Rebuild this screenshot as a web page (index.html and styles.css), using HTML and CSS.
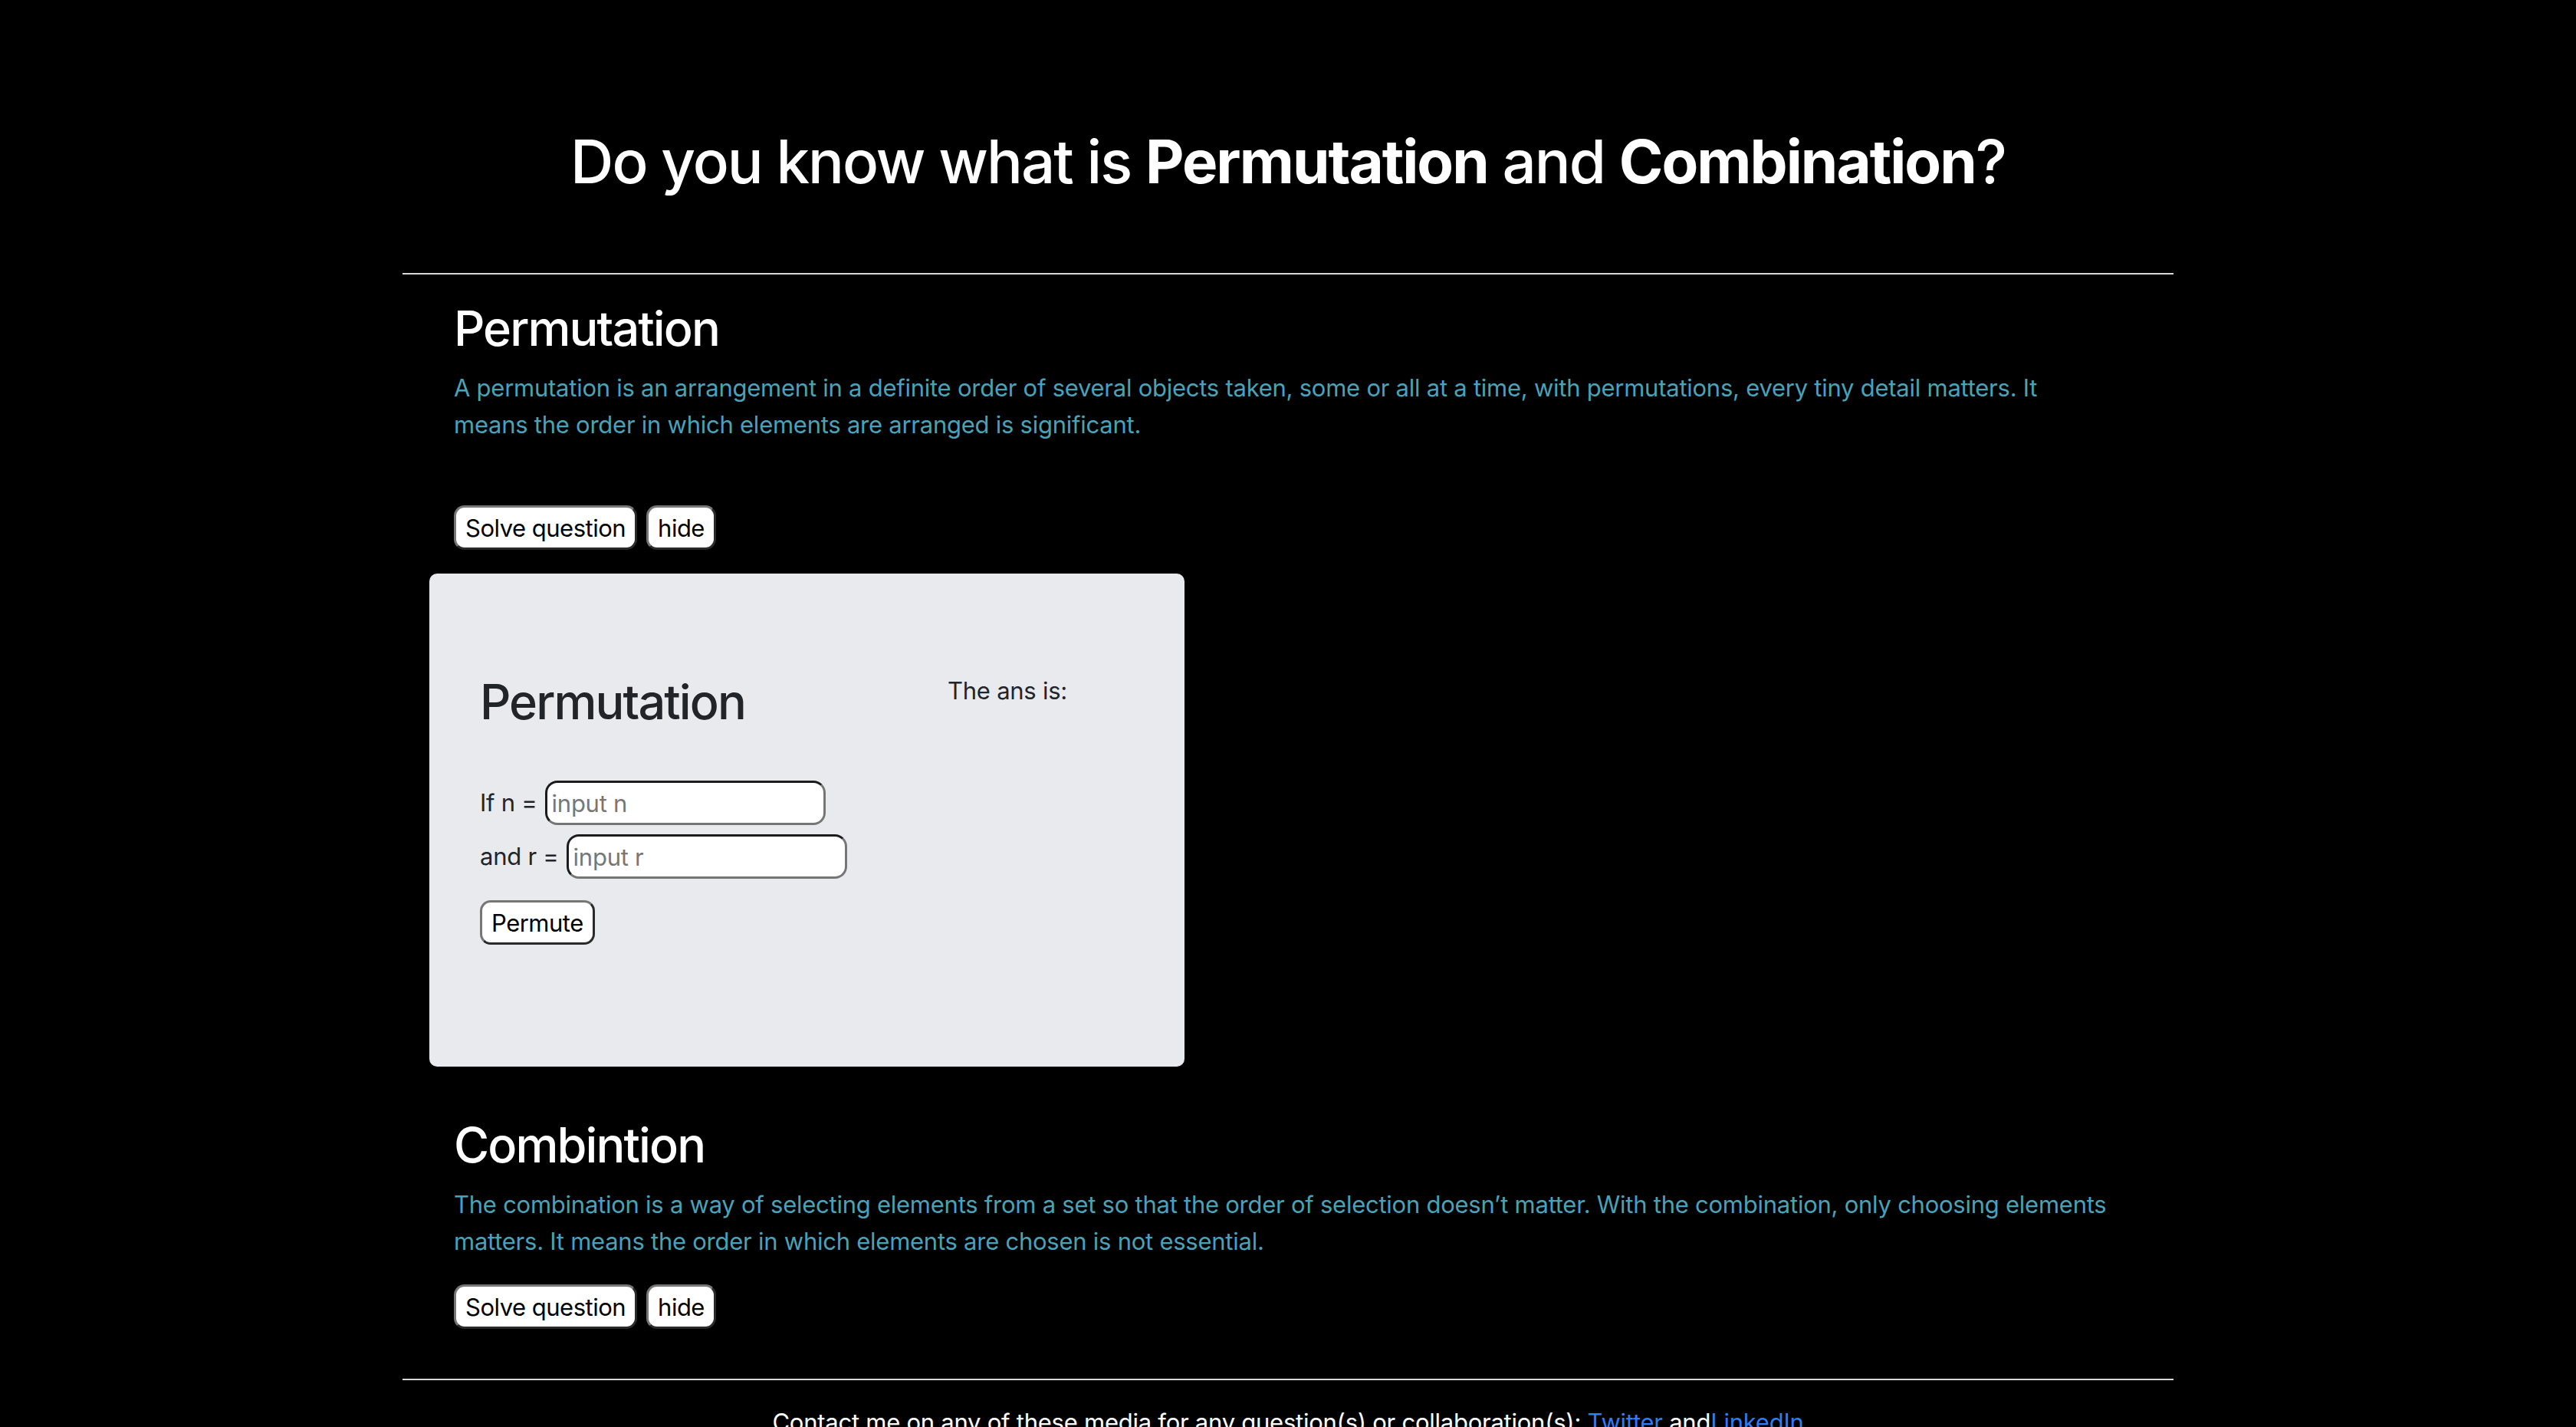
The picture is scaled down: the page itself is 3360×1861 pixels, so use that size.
FILE: index.html
```html
<!DOCTYPE html>
<html lang="en">
<head>
<meta charset="utf-8">
<title>Permutation and Combination</title>
<link rel="stylesheet" href="styles.css">
</head>
<body>
<main class="page">
  <h1 class="title">Do you know what is <b>Permutation</b> and <b>Combination</b>?</h1>
  <hr class="rule rule-top">

  <section class="topic">
    <h2 class="topic-title">Permutation</h2>
    <p class="topic-text">A permutation is an arrangement in a definite order of several objects taken, some or all at a time, with permutations, every tiny detail matters. It means the order in which elements are arranged is significant.</p>
    <div class="actions actions-first">
      <button class="btn">Solve question</button>
      <button class="btn">hide</button>
    </div>

    <div class="card">
      <div class="card-main">
        <h2 class="card-title">Permutation</h2>
        <div class="field">
          <label class="field-label">If n =</label>
          <input class="field-input" type="text" placeholder="input n">
        </div>
        <div class="field">
          <label class="field-label">and r =</label>
          <input class="field-input" type="text" placeholder="input r">
        </div>
        <button class="btn btn-go">Permute</button>
      </div>
      <p class="card-answer">The ans is:</p>
    </div>
  </section>

  <section class="topic topic-second">
    <h2 class="topic-title">Combintion</h2>
    <p class="topic-text">The combination is a way of selecting elements from a set so that the order of selection doesn’t matter. With the combination, only choosing elements matters. It means the order in which elements are chosen is not essential.</p>
    <div class="actions">
      <button class="btn">Solve question</button>
      <button class="btn">hide</button>
    </div>
  </section>

  <hr class="rule rule-bottom">
  <footer class="footer">Contact me on any of these media for any question(s) or collaboration(s): <a href="#">Twitter</a> and<a href="#">LinkedIn</a></footer>
</main>
</body>
</html>
```

FILE: styles.css
```css
* { box-sizing: border-box; }

html, body {
  margin: 0;
  padding: 0;
  background: #000;
}

body {
  color: #fff;
  font-family: Inter, "Noto Sans", "Liberation Sans", sans-serif;
  font-size: 31px;
  line-height: 1.5;
  letter-spacing: -0.25px;
  overflow: hidden;
}

.page {
  width: 2310px;
  margin: 0 auto;
}

.title {
  margin: 163px 0 0;
  font-size: 78px;
  font-weight: 500;
  line-height: 96px;
  text-align: center;
  letter-spacing: -2px;
}

.title b { font-weight: 700; }

.rule {
  border: 0;
  border-top: 2px solid #d8d8d8;
  margin: 0;
  height: 0;
}

.rule-top { margin-top: 97px; }

.topic {
  padding: 0 67px;
  margin-top: 32px;
}

.topic-title {
  margin: 0 0 15px;
  font-size: 63px;
  font-weight: 500;
  line-height: 77px;
  letter-spacing: -1.9px;
}

.topic-text {
  margin: 0;
  color: #4aa2b8;
  font-size: 31px;
  line-height: 48px;
  max-width: 2163px;
}

.actions {
  display: flex;
  gap: 12px;
  margin-top: 81px;
}

.topic-second .actions { margin-top: 32px; }

.btn {
  height: 58px;
  padding: 0 12px;
  background: #fff;
  color: #000;
  font-family: Inter, "Noto Sans", "Liberation Sans", sans-serif;
  font-size: 31px;
  border: 3px solid;
  border-color: #767676 #2a2a2a #2a2a2a #767676;
  border-radius: 14px;
  letter-spacing: -0.5px;
}

.card {
  display: grid;
  grid-template-columns: 610px 1fr;
  width: 985px;
  height: 643px;
  margin: 31px 0 0 -32px;
  padding: 129px 66px 0;
  background: #e9eaee;
  border-radius: 10px;
  color: #212529;
}

.card-main {
  display: flex;
  flex-direction: column;
  align-items: flex-start;
}

.card-title {
  margin: 0 0 64px;
  font-size: 63px;
  font-weight: 500;
  line-height: 77px;
  letter-spacing: -1.9px;
}

.card-answer {
  margin: 0;
  font-size: 31px;
  line-height: 48px;
}

.field {
  display: flex;
  align-items: center;
  gap: 10px;
  margin-bottom: 12px;
}

.field-label {
  font-size: 31px;
  line-height: 48px;
}

.field-input {
  width: 366px;
  height: 58px;
  padding: 0 6px;
  font-family: Inter, "Noto Sans", "Liberation Sans", sans-serif;
  font-size: 31px;
  letter-spacing: -0.25px;
  color: #212529;
  background: #fff;
  border: 3px solid;
  border-color: #1c1c1c #767676 #767676 #1c1c1c;
  border-radius: 16px;
  outline: none;
}

.field-input::placeholder { color: #777; }

.btn-go { margin-top: 16px; }

.topic-second { margin-top: 64px; }

.rule-bottom { margin-top: 65px; }

.footer {
  margin-top: 31px;
  text-align: center;
  font-size: 31px;
  line-height: 48px;
}

.footer a {
  color: #2f7cf6;
  text-decoration: none;
}
```
